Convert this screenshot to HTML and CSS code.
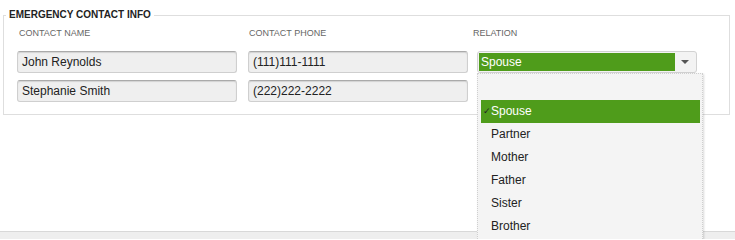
FILE: index.html
```html
<!DOCTYPE html>
<html>
<head>
<meta charset="utf-8">
<link rel="stylesheet" href="styles.css">
</head>
<body>
<fieldset class="panel">
  <legend class="panel-title">EMERGENCY CONTACT INFO</legend>
  <div class="grid">
    <div class="label">CONTACT NAME</div>
    <div class="label label-phone">CONTACT PHONE</div>
    <div class="label label-relation">RELATION</div>

    <div class="field">John Reynolds</div>
    <div class="field">(111)111-1111</div>
    <div class="select-cell">
      <div class="select">
        <span class="select-value">Spouse</span>
        <span class="select-arrow"></span>
      </div>
      <ul class="menu">
        <li class="opt opt-empty"></li>
        <li class="opt opt-selected"><span class="check">✓</span>Spouse</li>
        <li class="opt">Partner</li>
        <li class="opt">Mother</li>
        <li class="opt">Father</li>
        <li class="opt">Sister</li>
        <li class="opt">Brother</li>
      </ul>
    </div>

    <div class="field">Stephanie Smith</div>
    <div class="field">(222)222-2222</div>
    <div></div>
  </div>
</fieldset>
<div class="footer"></div>
</body>
</html>
```
FILE: styles.css
```css
html, body {
  margin: 0;
  padding: 0;
  background: #fff;
  font-family: "Liberation Sans", Arial, sans-serif;
  color: #222;
  overflow: hidden;
}

.panel {
  margin: 9px 5px 0 3px;
  padding: 7px 0 12px 13px;
  border: 1px solid #dedede;
  min-width: 0;
}

.panel-title {
  margin-left: -11px;
  padding: 0 3px;
  font-size: 10px;
  line-height: 12px;
  font-weight: bold;
  color: #222;
}

.grid {
  display: grid;
  grid-template-columns: 231px 225px 250px;
  row-gap: 7px;
}

.label {
  font-size: 9px;
  line-height: 11px;
  color: #666;
  padding-left: 2px;
  margin-bottom: 5px;
}

.label-phone {
  padding-left: 1px;
}

.label-relation {
  padding-left: 0;
}

.field {
  width: 220px;
  height: 22px;
  box-sizing: border-box;
  border: 1px solid #cfcfcf;
  border-top-color: #aaa;
  border-radius: 3px;
  background: #efefef;
  box-shadow: inset 0 1px 1px rgba(0,0,0,0.12);
  font-size: 12px;
  line-height: 20px;
  padding-left: 4px;
  color: #222;
}

.select-cell {
  position: relative;
  margin-left: 4px;
}

.select {
  width: 220px;
  height: 22px;
  box-sizing: border-box;
  border: 1px solid #d2d2d2;
  border-radius: 3px;
  background: #f3f3f3;
  padding: 1px;
  display: flex;
  align-items: stretch;
}

.select-value {
  width: 196px;
  background: #4f9c1b;
  color: #fff;
  font-size: 12px;
  line-height: 18px;
  padding-left: 2px;
  box-sizing: border-box;
}

.select-arrow {
  flex: 1;
  position: relative;
}

.select-arrow::after {
  content: "";
  position: absolute;
  left: 6px;
  top: 7px;
  border-left: 4px solid transparent;
  border-right: 4px solid transparent;
  border-top: 4px solid #555;
}

.menu {
  position: absolute;
  top: 22px;
  left: 0;
  width: 226px;
  box-sizing: border-box;
  margin: 0;
  padding: 3px 2px 10px 3px;
  list-style: none;
  background: #f4f4f4;
  border: 1px dotted #cfcfcf;
  box-shadow: 1px 1px 2px rgba(0,0,0,0.15);
  z-index: 5;
}

.opt {
  height: 23px;
  line-height: 23px;
  font-size: 12px;
  padding-left: 10px;
  color: #222;
  position: relative;
}

.opt-selected {
  background: #4f9c1b;
  color: #fff;
}

.check {
  position: absolute;
  left: 2px;
  top: 0;
  font-size: 9px;
  color: #222;
}

.footer {
  margin-top: 116px;
  height: 7px;
  background: #eeeeee;
  border-top: 1px solid #d8d8d8;
}
```
